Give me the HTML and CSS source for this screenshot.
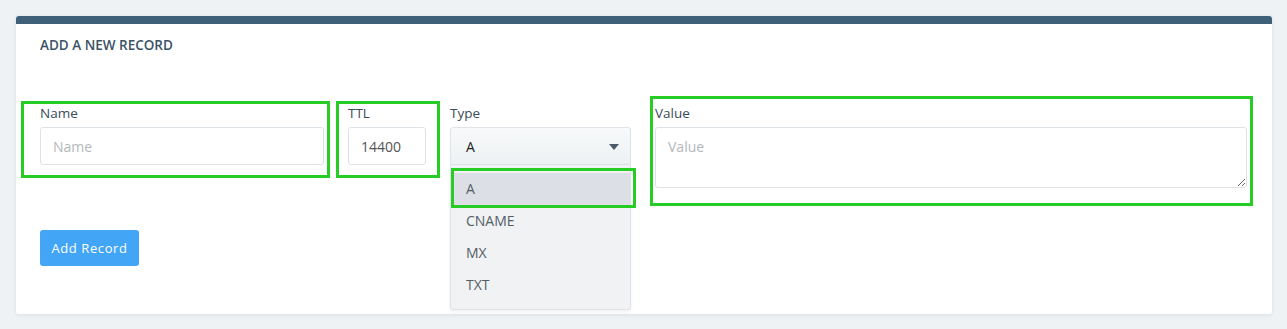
FILE: index.html
```html
<!DOCTYPE html>
<html lang="en">

<head>
    <meta charset="UTF-8">
    <title>Add Record</title>
    <link rel="stylesheet" href="styles.css">
</head>

<body>
    <div class="card">
        <h3 class="card-title">ADD A NEW RECORD</h3>
        <div class="fields">
            <div class="field field-name">
                <label>Name</label>
                <input type="text" placeholder="Name">
                <div class="mark mark-name"></div>
            </div>
            <div class="field field-ttl">
                <label>TTL</label>
                <input type="text" value="14400">
                <div class="mark mark-ttl"></div>
            </div>
            <div class="field field-type">
                <label>Type</label>
                <div class="select">
                    <span>A</span>
                    <svg class="caret" width="10" height="6" viewBox="0 0 10 6"><path d="M0 0h10L5 6z" fill="#4a5a68"/></svg>
                </div>
                <ul class="options">
                    <li class="active">A<div class="mark mark-opt"></div></li>
                    <li>CNAME</li>
                    <li>MX</li>
                    <li>TXT</li>
                </ul>
            </div>
            <div class="field field-value">
                <label>Value</label>
                <textarea placeholder="Value"></textarea>
                <div class="mark mark-value"></div>
            </div>
        </div>
        <button class="btn">Add Record</button>
    </div>
</body>

</html>
```

FILE: styles.css
```css
* {
    margin: 0;
    padding: 0;
    box-sizing: border-box;
}

html,
body {
    width: 100%;
    height: 100%;
    background: #eff2f4;
    font-family: "Open Sans", "Liberation Sans", sans-serif;
}

body {
    padding: 16px 15px 0 16px;
    overflow: hidden;
}

.card {
    background: #fff;
    border-top: 8px solid #3e6179;
    border-radius: 3px;
    box-shadow: 0 1px 4px rgba(0, 0, 0, 0.08);
    padding: 11px 25px 48px 24px;
}

.card-title {
    font-size: 13.5px;
    font-weight: 600;
    line-height: 20px;
    color: #3b5366;
}

.fields {
    display: flex;
    gap: 24px;
    margin-top: 48px;
    align-items: flex-start;
}

.field {
    position: relative;
    display: flex;
    flex-direction: column;
}

.field label {
    font-size: 13.5px;
    line-height: 20px;
    color: #3a4b59;
    margin-bottom: 4px;
}

.field input,
.field textarea {
    height: 38px;
    border: 1px solid #dde2e6;
    border-radius: 3px;
    font-family: inherit;
    font-size: 14px;
    color: #555;
    padding: 0 12px;
    outline: none;
    background: #fff;
}

.field input::placeholder,
.field textarea::placeholder {
    color: #b4b8bc;
}

.field-name {
    width: 284px;
}

.field-ttl {
    width: 78px;
}

.field-type {
    width: 181px;
}

.field-value {
    flex: 1;
}

.field textarea {
    height: 61px;
    padding: 9px 12px;
    resize: vertical;
}

.select {
    height: 38px;
    border: 1px solid #dfe3e7;
    border-radius: 3px 3px 0 0;
    background: linear-gradient(#f7f9fa, #eef1f3);
    display: flex;
    align-items: center;
    justify-content: space-between;
    padding: 0 11px 0 15px;
    font-size: 14px;
    color: #222;
}

.caret {
    margin-top: 1px;
}

.options {
    list-style: none;
    position: absolute;
    top: 62px;
    left: 0;
    width: 181px;
    background: #f0f2f4;
    border: 1px solid #dfe3e7;
    border-top: none;
    border-radius: 0 0 3px 3px;
    box-shadow: 0 2px 4px rgba(0, 0, 0, 0.06);
    padding: 8px 0;
}

.options li {
    position: relative;
    height: 32px;
    line-height: 32px;
    padding-left: 15px;
    font-size: 14px;
    color: #555d64;
}

.options li.active {
    background: #dcdfe5;
}

.btn {
    display: block;
    margin-top: 42px;
    width: 99px;
    height: 36px;
    border: none;
    border-radius: 3px;
    background: #42a5f5;
    color: #fff;
    font-family: inherit;
    font-size: 13px;
    letter-spacing: 0.6px;
}

.mark {
    position: absolute;
    border: 3px solid #27cc27;
    pointer-events: none;
}

.mark-name {
    left: -19px;
    top: -2px;
    width: 309px;
    height: 77px;
}

.mark-ttl {
    left: -12px;
    top: -2px;
    width: 104px;
    height: 77px;
}

.mark-value {
    left: -5px;
    top: -7px;
    right: -6px;
    height: 110px;
}

.mark-opt {
    left: 0;
    top: -5px;
    width: 185px;
    height: 40px;
}
```
